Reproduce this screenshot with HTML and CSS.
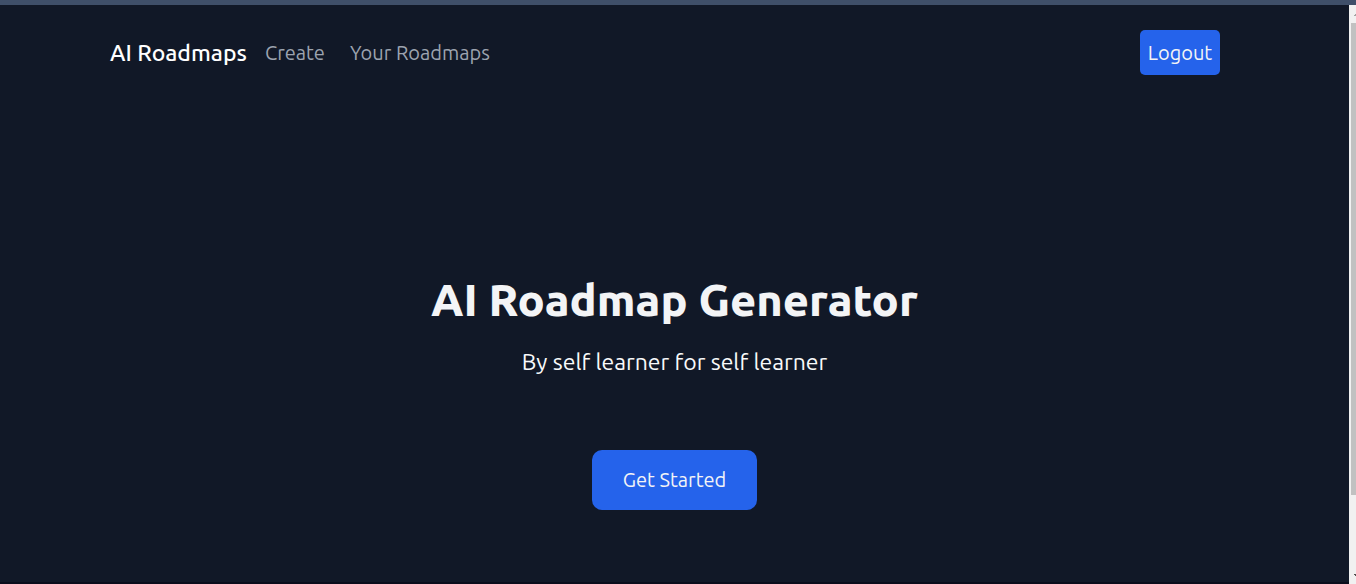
FILE: index.html
```html
<!DOCTYPE html>
<html lang="en">
<head>
<meta charset="utf-8">
<meta name="viewport" content="width=device-width, initial-scale=1">
<title>AI Roadmaps</title>
<link rel="stylesheet" href="styles.css">
</head>
<body>
<div class="window">
  <div class="page">
    <header class="navbar">
      <nav class="nav">
        <a class="brand" href="#">AI Roadmaps</a>
        <a class="nav-link" href="#create">Create</a>
        <a class="nav-link" href="#roadmaps">Your Roadmaps</a>
      </nav>
      <button class="logout" type="button">Logout</button>
    </header>
    <main class="hero">
      <h1 class="title">AI Roadmap Generator</h1>
      <p class="subtitle">By self learner for self learner</p>
      <button class="start" type="button">Get Started</button>
    </main>
  </div>
  <div class="scrollbar" aria-hidden="true">
    <svg class="arrow" viewBox="0 0 7 18"><path d="M5 11V10H6V9H7V11Z" fill="#a3a3a3"/></svg>
    <div class="track"><div class="thumb"></div></div>
    <svg class="arrow" viewBox="0 0 7 18"><path d="M5 8H7V10H6V9H5Z" fill="#505050"/></svg>
  </div>
</div>
</body>
</html>
```
FILE: styles.css
```css
* {
  box-sizing: border-box;
}

body {
  margin: 0;
  background: #111827;
  color: #f9fafb;
  font-family: Ubuntu, "Noto Sans", sans-serif;
  font-size: 20px;
  line-height: 30px;
}

.window {
  display: flex;
  min-height: 100vh;
  border-top: 5px solid #3f4f69;
}

.page {
  flex: 1;
  display: flex;
  flex-direction: column;
  border-bottom: 2px solid #0a0d1c;
}

.navbar {
  display: flex;
  justify-content: space-between;
  align-items: center;
  padding: 25px 129px 0 110px;
}

.nav {
  display: flex;
  align-items: center;
  gap: 25px;
}

.brand {
  margin-right: -7px;
  color: #fff;
  font-size: 23px;
  font-weight: 500;
  text-decoration: none;
}

.nav-link {
  color: #9ca3af;
  font-size: 20px;
  text-decoration: none;
}

.logout,
.start {
  border: 0;
  background: #2563eb;
  color: #f3f4f6;
  font: inherit;
  cursor: pointer;
}

.logout {
  min-width: 80px;
  height: 45px;
  padding: 0 7px;
  border-radius: 5px;
}

.hero {
  flex: 1;
  display: flex;
  flex-direction: column;
  align-items: center;
  justify-content: flex-end;
  padding-bottom: 72px;
  text-align: center;
}

.title {
  margin: 0;
  color: #f3f4f6;
  font-size: 45px;
  font-weight: 800;
  line-height: 50px;
}

.subtitle {
  margin: 19px 0 71px;
  font-size: 23px;
  line-height: 35px;
}

.start {
  min-width: 165px;
  height: 60px;
  padding: 0 28px;
  border-radius: 10px;
}

.scrollbar {
  width: 7px;
  display: flex;
  flex-direction: column;
  background: #f1f1f1;
}

.arrow {
  width: 7px;
  height: 18px;
}

.track {
  flex: 1;
  padding-left: 2px;
}

.thumb {
  height: 87%;
  background: #c1c1c1;
}
```
